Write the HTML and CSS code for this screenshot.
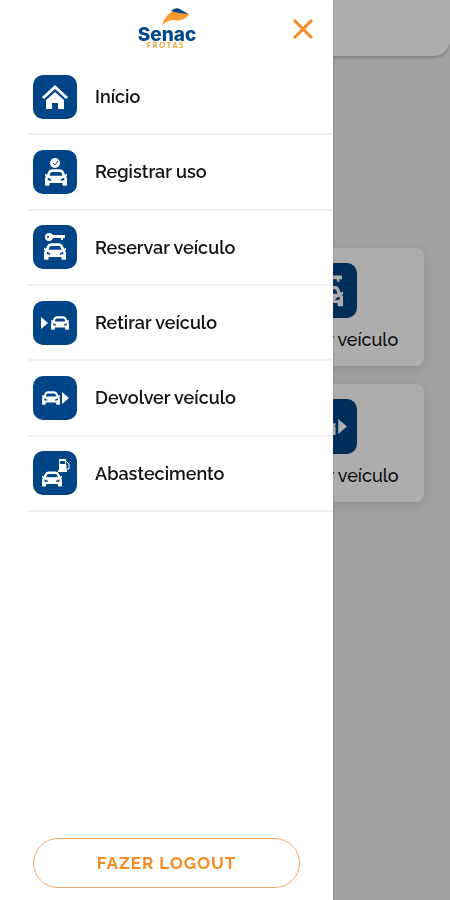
FILE: index.html
```html
<!DOCTYPE html>
<html lang="pt-br">
<head>
    <meta charset="UTF-8">
    <meta name="viewport" content="width=device-width, initial-scale=1.0">
    <title>Senac Frotas</title>
    <link rel="stylesheet" href="styles.css">
</head>
<body>
    <!-- Ícones usados no menu e nos cards -->
    <svg class="sprite" width="0" height="0" aria-hidden="true">
        <symbol id="carro" viewBox="0 0 24 18">
            <path fill="#fff" fill-rule="evenodd" d="M8 0h8q3 0 4 2l2 4 2-1v2l-1 1q1 1 1 3v6q0 1-1 1h-3q-1 0-1-1v-2H5v2q0 1-1 1H1q-1 0-1-1v-6Q0 9 1 8L0 7V5l2 1 2-4q1-2 4-2zM8 3Q6.500 3 6 4L5 7h14l-1-3Q17.500 3 16 3zM3 9.500v2.500l4 .5q0-2.500-4-3zM21 9.500v2.500l-4 .5q0-2.500 4-3z"/>
        </symbol>
        <symbol id="inicio" viewBox="0 0 44 44">
            <path d="M10 23L22 12l12 11" fill="none" stroke="#fff" stroke-width="3"/>
            <path d="M13 25l9-8 9 8v9h-6v-6h-6v6h-6z" fill="#fff"/>
        </symbol>
        <symbol id="registrar" viewBox="0 0 44 44">
            <circle cx="22" cy="13" r="5" fill="#fff"/>
            <path d="M20 13l2 2 3-4" fill="none" stroke="#004587" stroke-width="1"/>
            <use href="#carro" x="12" y="19" width="22" height="17"/>
        </symbol>
        <symbol id="reservar" viewBox="0 0 44 44">
            <path d="M16 8q3 0 4 2h12v3h-2v2h-2v-2h-8q-1 3-4 3a4 4 0 0 1 0-8z" fill="#fff"/>
            <circle cx="15" cy="12" r="1" fill="#004587"/>
            <use href="#carro" x="11" y="18" width="22" height="17"/>
        </symbol>
        <symbol id="retirar" viewBox="0 0 44 44">
            <path d="M8 16l7 6-7 6z" fill="#fff"/>
            <use href="#carro" x="18" y="15" width="18" height="14"/>
        </symbol>
        <symbol id="devolver" viewBox="0 0 44 44">
            <use href="#carro" x="9" y="15" width="18" height="14"/>
            <path d="M29 16l7 6-7 6z" fill="#fff"/>
        </symbol>
        <symbol id="abastecer" viewBox="0 0 44 44">
            <path fill="#fff" fill-rule="evenodd" d="M26 8h7v11h1v2h-9v-2h1zM27 10v3h5v-3z"/>
            <path d="M33 10l3 3v5h-3v-4" fill="none" stroke="#fff" stroke-width="1"/>
            <use href="#carro" x="9" y="20" width="20" height="16"/>
        </symbol>
    </svg>

    <div class="topo"></div>
    <main class="painel">
        <a class="card" href="#reservar-veiculo">
            <svg class="icone"><use href="#reservar"/></svg>
            <span>Reservar veículo</span>
        </a>
        <a class="card" href="#devolver-veiculo">
            <svg class="icone"><use href="#devolver"/></svg>
            <span>Devolver veículo</span>
        </a>
    </main>

    <div class="fundo"></div>

    <aside class="menu">
        <div class="menu-topo">
            <svg class="logo" viewBox="0 0 60 48" role="img" aria-label="Senac Frotas">
                <path d="M25 20q2-7 7-11Q39 1 52 9q-2 4-8 6-4 1-7 0-6 0-12 5z" fill="#f79a32"/>
                <path d="M34 6q4-4 9-2l8 5-9-1q-5-1-8-2z" fill="#00488d"/>
                <text class="logo-nome" x="30" y="36" text-anchor="middle">Senac</text>
                <text class="logo-sub" x="29" y="43" text-anchor="middle">FROTAS</text>
            </svg>
            <button class="fechar" type="button" aria-label="Fechar menu">
                <svg width="20" height="20" viewBox="0 0 20 20"><path d="M1 1l18 18M19 1L1 19" stroke="#f58a1f" stroke-width="3"/></svg>
            </button>
        </div>

        <nav class="lista">
            <a href="#inicio-app"><svg class="icone"><use href="#inicio"/></svg>Início</a>
            <a href="#registrar-uso"><svg class="icone"><use href="#registrar"/></svg>Registrar uso</a>
            <a href="#reservar-veiculo"><svg class="icone"><use href="#reservar"/></svg>Reservar veículo</a>
            <a href="#retirar-veiculo"><svg class="icone"><use href="#retirar"/></svg>Retirar veículo</a>
            <a href="#devolver-veiculo"><svg class="icone"><use href="#devolver"/></svg>Devolver veículo</a>
            <a href="#abastecimento"><svg class="icone"><use href="#abastecer"/></svg>Abastecimento</a>
        </nav>

        <button class="logout" type="button">FAZER LOGOUT</button>
    </aside>
</body>
</html>
```
FILE: styles.css
```css
* {
    box-sizing: border-box;
}
body {
    margin: 0;
    min-height: 100vh;
    background-color: #ebedf0;
    color: #111;
    font-family: Raleway, Lato, sans-serif;
    font-size: 18px;
    font-weight: 500;
}
a {
    color: inherit;
    text-decoration: none;
}
button {
    font-family: inherit;
    cursor: pointer;
}
.sprite {
    position: absolute;
}
.icone {
    flex: none;
    width: 44px;
    height: 44px;
    border-radius: 10px;
    background-color: #004587;
}

/* Tela por trás do menu */
.topo {
    height: 56px;
    background-color: #fff;
    border-radius: 0 0 16px 16px;
    box-shadow: 0 2px 3px rgba(0, 0, 0, 0.2);
}
.painel {
    display: grid;
    grid-template-columns: 1fr 1fr;
    gap: 18px;
    padding: 192px 26px 24px;
}
.card {
    grid-column: 2;
    display: flex;
    flex-direction: column;
    align-items: center;
    gap: 10px;
    height: 118px;
    padding-top: 15px;
    border-radius: 8px;
    background-color: #fff;
    box-shadow: 0 3px 12px rgba(0, 0, 0, 0.12);
    line-height: 24px;
    white-space: nowrap;
}
.card .icone {
    width: 55px;
    height: 55px;
}
.fundo {
    position: fixed;
    inset: 0;
    background-color: rgba(0, 0, 0, 0.32);
}

/* Menu lateral */
.menu {
    position: fixed;
    top: 0;
    bottom: 0;
    left: 0;
    width: 74%;
    display: flex;
    flex-direction: column;
    background-color: #fff;
    box-shadow: 0 0 2px rgba(0, 0, 0, 0.3);
}
.menu-topo {
    display: grid;
    grid-template-columns: 1fr 60px 1fr;
    align-items: center;
    height: 60px;
    padding-bottom: 2px;
}
.logo {
    grid-column: 2;
    width: 60px;
    height: 48px;
}
.logo-nome {
    fill: #00488d;
    font-family: Inter, sans-serif;
    font-size: 19px;
    font-weight: 800;
}
.logo-sub {
    fill: #f79a32;
    font-family: Lato, sans-serif;
    font-size: 7px;
    font-weight: 900;
    letter-spacing: 2px;
}
.fechar {
    justify-self: end;
    display: flex;
    margin-right: 20px;
    padding: 0;
    border: none;
    background: none;
}
.lista {
    display: grid;
    grid-auto-rows: 1fr;
    height: 452px;
    margin-left: 27px;
    font-weight: 600;
}
.lista a {
    display: flex;
    align-items: center;
    gap: 18px;
    padding-left: 6px;
    border-bottom: 2px solid #f0f0f0;
}
.logout {
    height: 50px;
    margin: auto 33px 12px;
    border: 1px solid #f7a763;
    border-radius: 25px;
    background-color: #fff;
    color: #f58a1f;
    font-size: 17px;
    font-weight: 700;
    letter-spacing: 1px;
}
```
